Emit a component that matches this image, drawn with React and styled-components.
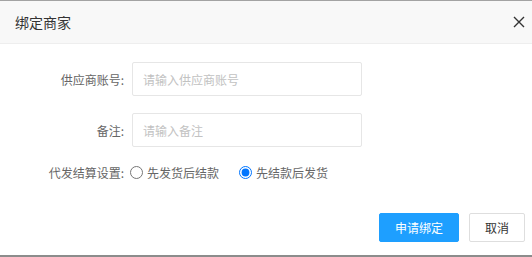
import React, { useState } from 'react';
import styled, { createGlobalStyle } from 'styled-components';

const GlobalStyle = createGlobalStyle`
  html, body {
    margin: 0;
    padding: 0;
    background: #ffffff;
  }
  body {
    font-family: "Noto Sans CJK SC", "Noto Sans", sans-serif;
    font-size: 12px;
    color: #333;
  }
`;

const Dialog = styled.div`
  width: 532px;
  height: 257px;
  box-sizing: border-box;
  border-top: 1px solid #a3a3a3;
  border-bottom: 2px solid #8c8c8c;
  background: #fff;
  display: flex;
  flex-direction: column;
`;

const Header = styled.div`
  height: 43px;
  box-sizing: border-box;
  display: flex;
  align-items: center;
  justify-content: space-between;
  padding: 0 2px 0 15px;
  background: #f8f8f8;
  border-bottom: 1px solid #eee;
`;

const Title = styled.span`
  font-size: 14px;
  color: #333;
`;

const CloseButton = styled.button`
  width: 22px;
  height: 22px;
  padding: 0;
  border: none;
  background: none;
  display: flex;
  align-items: center;
  justify-content: center;
  cursor: pointer;
`;

const Form = styled.div`
  flex: 1;
  display: flex;
  flex-direction: column;
  padding-top: 18px;
`;

const Row = styled.div`
  display: flex;
  align-items: center;
  height: ${({ h }) => h || 34}px;
  margin-bottom: ${({ mb }) => mb || 0}px;
`;

const Label = styled.label`
  width: 124px;
  text-align: right;
  color: #666;
  font-size: 12px;
  flex-shrink: 0;
  margin-right: ${({ gap }) => gap}px;
`;

const Input = styled.input`
  width: 230px;
  height: 34px;
  box-sizing: border-box;
  border: 1px solid #e6e6e6;
  border-radius: 2px;
  padding: 0 10px;
  font-family: inherit;
  font-size: 12px;
  color: #333;
  outline: none;
  &::placeholder {
    color: #c2c2c2;
  }
`;

const RadioOption = styled.label`
  display: flex;
  align-items: center;
  margin-right: ${({ mr }) => mr || 0}px;
  color: #666;
  font-size: 12px;
  cursor: pointer;
  input {
    margin: 0 4px 0 0;
    width: 13px;
    height: 13px;
  }
`;

const Footer = styled.div`
  display: flex;
  justify-content: flex-end;
  gap: 10px;
  padding: 0 7px 13px 0;
`;

const Btn = styled.button`
  height: 29px;
  box-sizing: border-box;
  padding: 0;
  border-radius: 2px;
  font-family: inherit;
  font-size: 12px;
  cursor: pointer;
  border: 1px solid ${({ primary }) => (primary ? '#1e9fff' : '#dedede')};
  background: ${({ primary }) => (primary ? '#1e9fff' : '#fff')};
  color: ${({ primary }) => (primary ? '#fff' : '#333')};
  width: ${({ primary }) => (primary ? 80 : 56)}px;
`;

export default function App() {
  const [mode, setMode] = useState('after');

  return (
    <>
      <GlobalStyle />
      <Dialog>
        <Header>
          <Title>绑定商家</Title>
          <CloseButton aria-label="关闭">
            <svg width="12" height="12" viewBox="0 0 12 12">
              <path d="M1 1L11 11M11 1L1 11" stroke="#333" strokeWidth="1.4" />
            </svg>
          </CloseButton>
        </Header>
        <Form>
          <Row mb={17}>
            <Label gap={8}>供应商账号:</Label>
            <Input placeholder="请输入供应商账号" />
          </Row>
          <Row mb={10}>
            <Label gap={8}>备注:</Label>
            <Input placeholder="请输入备注" />
          </Row>
          <Row h={30}>
            <Label gap={6}>代发结算设置:</Label>
            <RadioOption mr={20}>
              <input
                type="radio"
                name="mode"
                checked={mode === 'before'}
                onChange={() => setMode('before')}
              />
              先发货后结款
            </RadioOption>
            <RadioOption>
              <input
                type="radio"
                name="mode"
                checked={mode === 'after'}
                onChange={() => setMode('after')}
              />
              先结款后发货
            </RadioOption>
          </Row>
        </Form>
        <Footer>
          <Btn primary>申请绑定</Btn>
          <Btn>取消</Btn>
        </Footer>
      </Dialog>
    </>
  );
}
